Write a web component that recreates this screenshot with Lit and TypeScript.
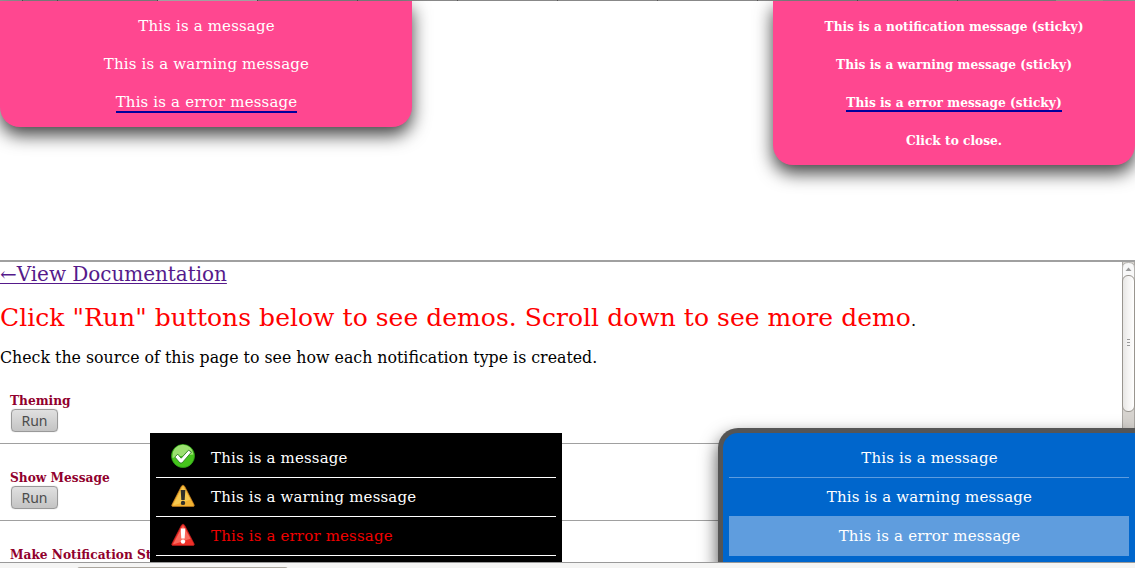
import { LitElement, html, css, svg } from "lit";
import { customElement, property } from "lit/decorators.js";

@customElement("status-icon")
class StatusIcon extends LitElement {
  @property() kind = "ok";
  static styles = css`
    :host { display: block; width: 24px; height: 24px; }
    svg { display: block; }
  `;
  render() {
    const ok = svg`
      <circle cx="12" cy="12" r="11.500" fill="#45c41c" stroke="#2f9e18" stroke-width=".8"/>
      <path d="M1.500 12a10.500 10.500 0 0 1 21-1.500c-6 1-14 1-21 3.500z" fill="#9be070"/>
      <path d="M3.800 13l3-2.800 3.400 4L17.500 6.200l3 1.800L11 19H9z" fill="#fff" stroke="#2c7d20" stroke-width=".9"/>`;
    const warn = svg`
      <path d="M12 1.200q1.200 0 2 1.800l9 17.500q.9 2-1 2H2q-1.900 0-1-2L10 3q.8-1.800 2-1.800z" fill="#f2b232" stroke="#bd781e" stroke-width=".7"/>
      <path d="M12 2.500L2 21.200C8 20 16 17 19.500 15.500z" fill="#f8d05b" opacity=".75"/>
      <path d="M9.700 6h4.600L13.700 16h-3.400z" fill="#302f2b"/><circle cx="12" cy="18.900" r="2.200" fill="#302f2b"/>`;
    const err = svg`
      <path d="M12 1.200q1.200 0 2 1.800l9 17.500q.9 2-1 2H2q-1.900 0-1-2L10 3q.8-1.800 2-1.800z" fill="#ef3028" stroke="#b51d1d" stroke-width=".7"/>
      <path d="M12 2.500L2 21.200C8 20 16 17 19.500 15.500z" fill="#ff8173" opacity=".7"/>
      <path d="M9.700 5.500h4.600L13.700 15.500h-3.400z" fill="#fff"/><circle cx="12" cy="18.600" r="2.200" fill="#fff"/>`;
    return html`<svg width="24" height="24" viewBox="0 0 24 24">${this.kind === "ok" ? ok : this.kind === "warn" ? warn : err}</svg>`;
  }
}

@customElement("app-root")
class AppRoot extends LitElement {
  static styles = css`
    :host { display: block; font-family: "DejaVu Serif", serif; }
    * { box-sizing: border-box; }
    .window { position: relative; display: flex; flex-direction: column; width: 1135px; height: 568px; overflow: hidden; background: #fff; color: #000; }
    .strip { height: 1px; background: linear-gradient(90deg, #999 0 22px, #555 22px 23px, #888 23px 57px, #555 57px 58px, #888 58px 157px, #555 157px 158px, #b8b8b8 158px 257px, #555 257px 258px, #888 258px 357px, #555 357px 358px, #888 358px 457px, #555 457px 458px, #888 458px 557px, #555 557px 558px, #888 558px 657px, #555 657px 658px, #888 658px 757px, #555 757px 758px, #888 758px 857px, #555 857px 858px, #888 858px 957px, #555 957px 958px, #888 958px 1056px, #aaa898 1056px 1103px, #999 1103px); }
    .blank { height: 259px; }
    .frame { display: flex; height: 302px; border-top: 2px solid #a0a0a0; overflow: hidden; }
    .content { flex: 1; min-width: 0; white-space: nowrap; }
    .doc { height: 24px; font-size: 20px; letter-spacing: -.045px; line-height: 24px; }
    .doc a { color: #551a8b; text-decoration: underline; text-decoration-thickness: 1px; text-underline-offset: 2px; }
    .lead { margin-top: 16px; height: 31px; font-size: 13.300px; line-height: 31px; }
    .big { color: #f00; font-size: 25px; letter-spacing: .04px; }
    .dot { font-size: 16px; line-height: 1; }
    .note { margin-top: 14px; height: 21px; font-size: 15.800px; line-height: 21px; }
    .demos { padding-top: 17px; }
    .demo { height: 77px; padding: 26px 10px 0; border-bottom: 1px solid #a0a0a0; }
    .demo:first-child { height: 59px; padding-top: 8px; }
    .name { height: 16px; font-size: 12.200px; line-height: 16px; font-weight: bold; color: #91002d; }
    .run { display: block; margin: 0 0 0 1px; padding: 0; width: 47px; height: 23px; border: 1px solid #999; border-radius: 4px; background: linear-gradient(#e0e0e0, #c4c4c4); box-shadow: 0 0 1px #aaa; color: #4c4c4c; font: 14px/20px "Noto Sans", sans-serif; }
    .bar { width: 13px; background: #d6d3cf; }
    .bar svg { display: block; }
    .foot { height: 6px; border-top: 1px solid #999; background: #f5f5f4; padding: 4px 0 0 77px; }
    .foot span { display: block; width: 211px; height: 3px; border-top: 1px solid #aaa69e; border-radius: 3px 3px 0 0; background: #e5e3e0; }

    .toast { position: absolute; font-size: 15px; letter-spacing: .16px; color: #fff; white-space: nowrap; }
    .pink { top: 1px; background: #ff4790; border-radius: 0 0 20px 20px; box-shadow: 0 8px 18px rgba(0,0,0,.75); text-align: center; padding-top: 7px; }
    .pink .line { height: 38px; line-height: 36px; }
    .left { left: 0; width: 412px; height: 126px; padding-left: 1px; }
    .right { left: 773px; width: 362px; height: 164px; padding-top: 8px; font-size: 12.200px; letter-spacing: 0; font-weight: bold; }
    .under { display: inline-block; line-height: 17px; border-bottom: 2px solid #00009c; }
    .right .under { line-height: 13px; }
    .black { left: 150px; top: 433px; width: 412px; height: 129px; background: #000; padding: 6px; }
    .black .line { display: flex; align-items: center; height: 39px; border-bottom: 1px solid #fff; padding-left: 15px; gap: 16px; }
    .black status-icon { margin-bottom: 2px; }
    .black status-icon[kind="ok"] { margin-bottom: 4px; }
    .error { color: #f00000; }
    .clip { position: absolute; left: 690px; top: 400px; width: 445px; height: 162px; overflow: hidden; padding: 28px 0 0 28px; }
    .blue { width: 417px; height: 140px; background: #06c; border: 5px solid #555; border-right: 0; border-bottom: 0; border-radius: 20px 0 0 0; box-shadow: 0 8px 18px rgba(0,0,0,.7); padding: 6px; text-align: center; }
    .blue .line { height: 39px; line-height: 39px; border-bottom: 1px solid #5d9cdf; padding-left: 1px; }
    .blue .line:nth-child(2) { height: 38px; border: 0; line-height: 38px; }
    .blue .line:last-child { height: 40px; line-height: 41px; background: #5f9dde; border: 0; }
  `;
  render() {
    return html`
      <div class="window">
        <div class="strip"></div>
        <div class="blank"></div>
        <div class="frame">
          <div class="content">
            <div class="doc"><a>←View Documentation</a></div>
            <div class="lead"><span class="big">Click "Run" buttons below to see demos. Scroll down to see more demo</span><span class="dot">.</span></div>
            <div class="note"><span>Check the source of this page to see how each notification type is created.</span></div>
            <div class="demos">
              <div class="demo"><div class="name">Theming</div><button class="run">Run</button></div>
              <div class="demo"><div class="name">Show Message</div><button class="run">Run</button></div>
              <div class="demo"><div class="name">Make Notification Sticky</div></div>
            </div>
          </div>
          <div class="bar">
            <svg width="13" height="170">
              <defs><linearGradient id="thumb"><stop offset="0" stop-color="#e6e5e3"/><stop offset=".45" stop-color="#f4f3f2"/><stop offset="1" stop-color="#fff"/></linearGradient></defs>
              <path d="M.5 0V170M12.500 0V170" stroke="#aaa7a3"/>
              <path d="M.5 20V6q0-5.500 6-5.500t6 5.500V20" fill="#f8f8f8" stroke="#b5b3b0"/>
              <path d="M3.500 9L6.500 5.500 9.500 9z" fill="#999"/>
              <rect x=".5" y="13.500" width="12" height="136" rx="5.500" fill="url(#thumb)" stroke="#99958f"/>
              <path d="M5 77.500h3M5 80.500h3M5 83.500h3" stroke="#999"/>
            </svg>
          </div>
        </div>
        <div class="foot"><span></span></div>

        <div class="toast pink left">
          <div class="line"><span>This is a message</span></div>
          <div class="line"><span>This is a warning message</span></div>
          <div class="line"><span class="under">This is a error message</span></div>
        </div>
        <div class="toast pink right">
          <div class="line"><span>This is a notification message (sticky)</span></div>
          <div class="line"><span>This is a warning message (sticky)</span></div>
          <div class="line"><span class="under">This is a error message (sticky)</span></div>
          <div class="line"><span>Click to close.</span></div>
        </div>
        <div class="toast black">
          <div class="line"><status-icon kind="ok"></status-icon><span>This is a message</span></div>
          <div class="line"><status-icon kind="warn"></status-icon><span>This is a warning message</span></div>
          <div class="line"><status-icon kind="err"></status-icon><span class="error">This is a error message</span></div>
        </div>
        <div class="clip">
          <div class="blue toast">
            <div class="line">This is a message</div>
            <div class="line">This is a warning message</div>
            <div class="line">This is a error message</div>
          </div>
        </div>
      </div>`;
  }
}
